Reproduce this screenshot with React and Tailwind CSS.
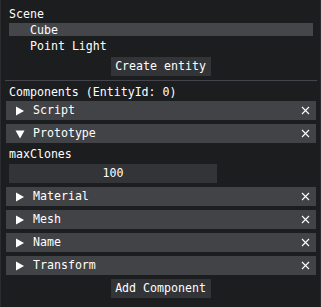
import React from "react";

const Arrow = ({ open }) => (
  <svg width="10" height="10" viewBox="0 0 10 10" className="shrink-0">
    {open ? (
      <polygon points="0.5,1.5 9.5,1.5 5,9.5" fill="#ffffff" />
    ) : (
      <polygon points="1,0.5 9,5 1,9.5" fill="#ffffff" />
    )}
  </svg>
);

const Close = () => (
  <svg width="9" height="9" viewBox="0 0 9 9" className="shrink-0">
    <path d="M1 1 L8 8 M8 1 L1 8" stroke="#ffffff" strokeWidth="1.1" />
  </svg>
);

const Header = ({ label, open, className = "mt-[4px]" }) => (
  <div
    className={`${className} ml-[5px] mr-[4px] h-[19px] bg-[#424346] flex items-center pl-[9px] pr-[6px]`}
  >
    <Arrow open={open} />
    <span className="ml-[8px] leading-[13px] flex-1">{label}</span>
    <Close />
  </div>
);

export default function App() {
  return (
    <div
      className="w-[321px] h-[307px] bg-[#1c1d1f] border-x border-[#2b2b30] text-white text-[11.6px] leading-[13px] overflow-hidden flex flex-col"
      style={{ fontFamily: "'DejaVu Sans Mono', 'Liberation Mono', monospace" }}
    >
      <div className="mt-[8px] ml-[8px] h-[13px]">Scene</div>
      <div className="mt-[2px] ml-[8px] mr-[7px] h-[13px] bg-[#454649] pl-[21px] pt-px leading-[12px]">
        Cube
      </div>
      <div className="mt-[3px] ml-[8px] mr-[7px] h-[13px] pl-[21px] pt-px leading-[12px]">
        Point Light
      </div>
      <div className="mt-[5px] flex justify-center">
        <button className="w-[100px] h-[19px] bg-[#333437] text-white flex items-center justify-center leading-[13px]">
          Create entity
        </button>
      </div>
      <div className="mt-[4px] ml-[4px] mr-[3px] h-px bg-[#45444d]" />
      <div className="mt-[5px] ml-[8px] h-[13px]">Components (EntityId: 0)</div>
      <Header label="Script" className="mt-[2px]" />
      <Header label="Prototype" open />
      <div className="mt-[5px] ml-[8px] h-[13px]">maxClones</div>
      <div className="mt-[3px] ml-[8px] w-[208px] h-[19px] bg-[#333437] flex items-center justify-center">
        100
      </div>
      <Header label="Material" />
      <Header label="Mesh" />
      <Header label="Name" />
      <Header label="Transform" />
      <div className="mt-[4px] flex justify-center">
        <button className="w-[100px] h-[19px] bg-[#333437] text-white flex items-center justify-center leading-[13px]">
          Add Component
        </button>
      </div>
    </div>
  );
}
